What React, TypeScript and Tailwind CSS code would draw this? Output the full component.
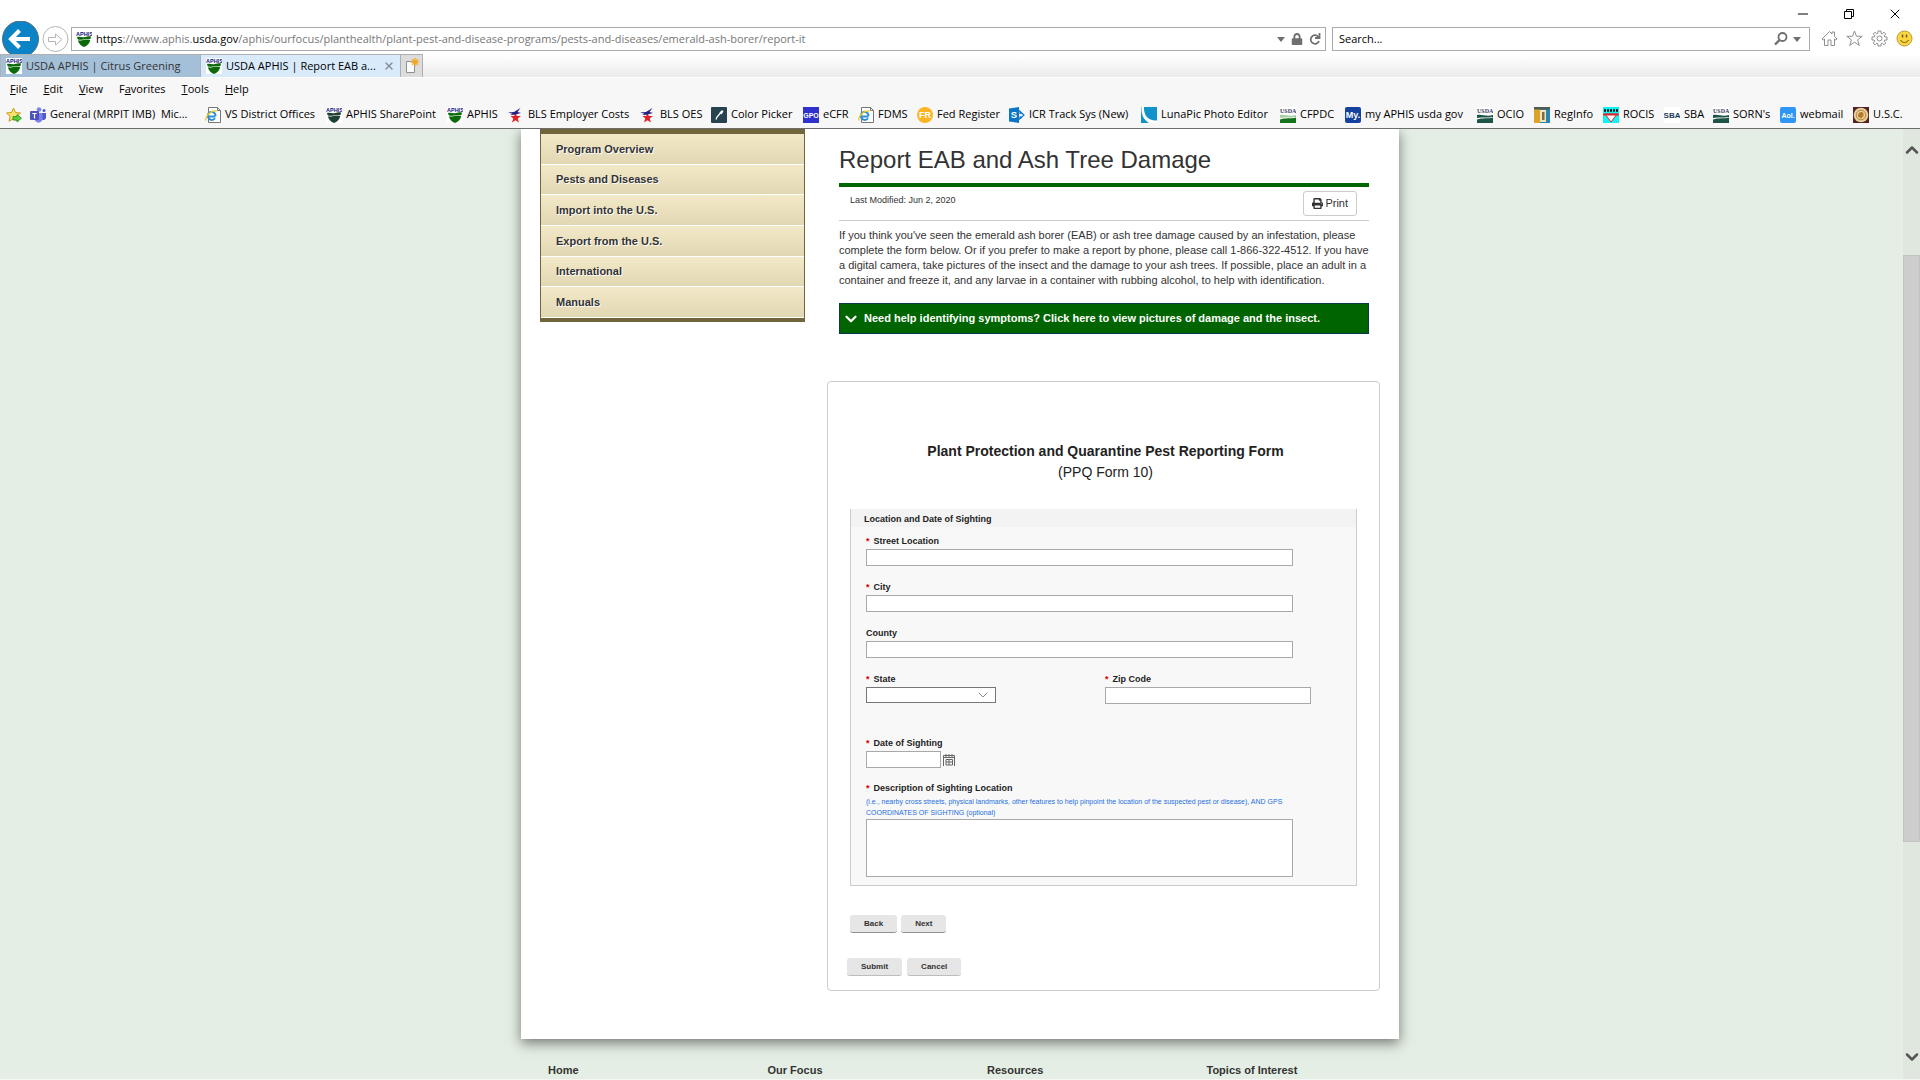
import type { ReactNode } from "react";
import { ChevronDown, ChevronUp, Minus, X } from "lucide-react";
import { FaLock, FaPrint } from "react-icons/fa";

function AphisIcon({ dark = false }: { dark?: boolean }) {
  const fill = dark ? "#1c4034" : "#0b6b0b";
  return (
    <svg viewBox="0 0 16 16" className="size-4 shrink-0 bg-white">
      <text x="0" y="4.5" fontSize="5.5" fontWeight="bold" fontFamily="Liberation Sans, sans-serif" fill="#10107c">
        APHIS
      </text>
      <path d="M1 6c3-1 5 1 8 0s4-1 6-.5L14.500 8C12 9 10 8 7 8.500S3 9 1.500 8z" fill={fill} />
      <path d="M1.800 9.300c3 .8 5-.6 7.500-.5s3 .6 5 .1C13.500 12.500 11 14.800 8 16c-3-1.200-5.400-3.300-6.200-6.700z" fill={fill} />
    </svg>
  );
}

function UsdaIcon({ dark = false }: { dark?: boolean }) {
  const fill = dark ? "#1e5347" : "#14711c";
  return (
    <svg viewBox="0 0 16 16" className="size-4 shrink-0 bg-white">
      <text x="0" y="6" fontSize="6" fontWeight="bold" fontFamily="Liberation Serif, serif" fill="#3b3b5e">
        USDA
      </text>
      <path d="M0 8c6-1 9 2 16 0v2c-6 1-10 0-16 1z" fill={dark ? fill : "#a9cfa4"} />
      <path d="M0 12.500c5-2 11-.5 16-2V16H0z" fill={fill} />
    </svg>
  );
}

function IePageIcon() {
  return (
    <svg viewBox="0 0 16 16" className="size-4 shrink-0">
      <path d="M3.500.5h9l3 3v12h-12z" fill="#fff" stroke="#777" />
      <path d="M12.500.5v3h3" fill="none" stroke="#777" />
      <path d="M10.500 9.500H3a3.800 3.800 0 1 1 7.500-.6M10 11.300a3.800 3.800 0 0 1-6.900-1.600" fill="none" stroke="#2a8fd8" strokeWidth="2" />
      <path d="M1 13.500C-.5 10 6 3 11.500 4" fill="none" stroke="#f2c71b" strokeWidth="1.300" />
    </svg>
  );
}

function BlsIcon() {
  return (
    <svg viewBox="0 0 16 16" className="size-4 shrink-0">
      <path d="M7.500 5.500 8.800 9H13l-3.300 2.500L11 15.500l-3.500-2.300L4 15.500l1.300-4L2.500 9h3.700z" fill="#e31f26" />
      <path d="M0 5.500 6 5l6.500-4L9.500 5 13 6 6.500 7.800 2 8l2.500-1.300z" fill="#22227e" />
    </svg>
  );
}

/* Square favicon with a short piece of lettering */
function LetterIcon({ text, bg, fg = "#fff", size = 7, round = 0 }: { text: string; bg: string; fg?: string; size?: number; round?: number }) {
  return (
    <svg viewBox="0 0 16 16" className="size-4 shrink-0">
      <rect width="16" height="16" rx={round} fill={bg} />
      <text x="8" y={8 + size * 0.36} fontSize={size} fontWeight="bold" textAnchor="middle" fontFamily="Liberation Sans, sans-serif" fill={fg}>
        {text}
      </text>
    </svg>
  );
}

function TeamsIcon() {
  return (
    <svg viewBox="0 0 16 16" className="size-4 shrink-0">
      <circle cx="9" cy="2.500" r="2.300" fill="#7b83eb" />
      <circle cx="14" cy="3.500" r="1.500" fill="#5059c9" />
      <path d="M11.500 6H16v4.500a2.500 2.500 0 0 1-4 2z" fill="#5059c9" />
      <path d="M5 6h7.500v6a4 4 0 0 1-7.500 1.500z" fill="#7b83eb" />
      <rect y="4" width="9" height="9" rx="1" fill="#4b53bc" />
      <path d="M2.300 6.500h4.400M4.500 6.500v5" stroke="#fff" strokeWidth="1.200" />
    </svg>
  );
}

function PickerIcon() {
  return (
    <svg viewBox="0 0 16 16" className="size-4 shrink-0">
      <rect width="16" height="16" rx="1" fill="#27434f" />
      <path d="M5 12.500 6 10l3.500-4" fill="none" stroke="#fff" strokeWidth="1.300" />
      <path d="m8.500 5.500 2.500-2.500 1.500 1.500L10.500 7.500z" fill="#fff" />
    </svg>
  );
}

function SharePointIcon() {
  return (
    <svg viewBox="0 0 16 16" className="size-4 shrink-0">
      <path d="M10 3.500 15 8l-5 4.500" fill="none" stroke="#0b76c8" strokeWidth="1.200" />
      <circle cx="11.500" cy="6" r="1.200" fill="#0b76c8" />
      <circle cx="11.500" cy="10.500" r="1.200" fill="#0b76c8" />
      <path d="M0 1.500 10 0v16L0 14.500z" fill="#0b76c8" />
      <text x="5" y="11.300" fontSize="9.500" fontWeight="bold" textAnchor="middle" fontFamily="Liberation Sans, sans-serif" fill="#fff">
        S
      </text>
    </svg>
  );
}

function LunaIcon() {
  return (
    <svg viewBox="0 0 16 16" className="size-4 shrink-0">
      <rect width="16" height="16" fill="#0f93c9" />
      <path d="M3 0c-.5 8 4 14 13 13.500V16H8C3 13 0 8 .5 0z" fill="#fff" />
    </svg>
  );
}

function RegInfoIcon() {
  return (
    <svg viewBox="0 0 16 16" className="size-4 shrink-0">
      <rect width="16" height="16" fill="#2b84ae" />
      <rect y="2" width="6" height="14" fill="#dca32a" />
      <path d="M6 3h6v12H6z" fill="#f0e3c2" />
      <path d="M8 5h2.500v8H8z" fill="#7d6a44" />
      <rect width="16" height="2.500" fill="#4d5b50" />
    </svg>
  );
}

function RocisIcon() {
  return (
    <svg viewBox="0 0 16 16" className="size-4 shrink-0">
      <rect width="16" height="16" fill="#11f2f5" />
      <path d="M2 7h12l-6 8z" fill="#fff" stroke="#e3262b" />
      <rect y="6.500" width="16" height="2" fill="#d9282c" />
      <path d="M1 3.500h14" stroke="#111" strokeWidth="2.500" strokeDasharray="2 1" />
    </svg>
  );
}

function SealIcon() {
  return (
    <svg viewBox="0 0 16 16" className="size-4 shrink-0">
      <rect width="16" height="16" fill="#542224" />
      <circle cx="8" cy="8" r="7.300" fill="#e7cf9a" />
      <circle cx="8" cy="8" r="4.800" fill="none" stroke="#b98538" />
      <path d="M5 9.500c0-3 1-4 3-4.500s3 1.500 2.500 4L8 11.500z" fill="#b8752b" />
    </svg>
  );
}

type Bookmark = { label: string; width: string; icon: ReactNode };

const bookmarks: Bookmark[] = [
  { label: "General (MRPIT IMB)\u00a0 Mic...", width: "w-[175px]", icon: <TeamsIcon /> },
  { label: "VS District Offices", width: "w-[121px]", icon: <IePageIcon /> },
  { label: "APHIS SharePoint", width: "w-[121px]", icon: <AphisIcon dark /> },
  { label: "APHIS", width: "w-[61px]", icon: <AphisIcon /> },
  { label: "BLS Employer Costs", width: "w-[132px]", icon: <BlsIcon /> },
  { label: "BLS OES", width: "w-[71px]", icon: <BlsIcon /> },
  { label: "Color Picker", width: "w-[92px]", icon: <PickerIcon /> },
  { label: "eCFR", width: "w-[55px]", icon: <LetterIcon text="GPO" bg="#3030cc" size={7} /> },
  { label: "FDMS", width: "w-[59px]", icon: <IePageIcon /> },
  { label: "Fed Register", width: "w-[92px]", icon: <LetterIcon text="FR" bg="#fbb524" size={9} round={8} /> },
  { label: "ICR Track Sys (New)", width: "w-[132px]", icon: <SharePointIcon /> },
  { label: "LunaPic Photo Editor", width: "w-[139px]", icon: <LunaIcon /> },
  { label: "CFPDC", width: "w-[65px]", icon: <UsdaIcon /> },
  { label: "my APHIS usda gov", width: "w-[132px]", icon: <LetterIcon text="My." bg="#1440a0" size={9} round={2} /> },
  { label: "OCIO", width: "w-[57px]", icon: <UsdaIcon dark /> },
  { label: "RegInfo", width: "w-[69px]", icon: <RegInfoIcon /> },
  { label: "ROCIS", width: "w-[61px]", icon: <RocisIcon /> },
  { label: "SBA", width: "w-[49px]", icon: <LetterIcon text="SBA" bg="#fff" fg="#173a55" size={8} /> },
  { label: "SORN's", width: "w-[67px]", icon: <UsdaIcon dark /> },
  { label: "webmail", width: "w-[73px]", icon: <LetterIcon text="Aol." bg="#2f96f5" size={7} round={2} /> },
  { label: "U.S.C.", width: "w-[56px]", icon: <SealIcon /> },
];

const menus = [
  ["", "F", "ile"],
  ["", "E", "dit"],
  ["", "V", "iew"],
  ["F", "a", "vorites"],
  ["", "T", "ools"],
  ["", "H", "elp"],
];

const navItems = [
  "Program Overview",
  "Pests and Diseases",
  "Import into the U.S.",
  "Export from the U.S.",
  "International",
  "Manuals",
];

function AddressBar() {
  return (
    <div className="flex h-[27px] items-start pl-[2px] pr-[7px]">
      <button aria-label="Back" className="-mt-[6px] h-[33px] w-[37px] shrink-0 overflow-hidden">
        <svg viewBox="0 0 37 33" className="h-[33px] w-[37px]">
          <circle cx="18.500" cy="18" r="18" fill="#0a84c6" stroke="#5b6c78" strokeWidth="1" />
          <path d="M28 18H9.500M17.500 9.500 9 18l8.500 8.500" fill="none" stroke="#fff" strokeWidth="4" />
        </svg>
      </button>
      <button aria-label="Forward" className="-mt-px ml-[3px] size-[27px] shrink-0">
        <svg viewBox="0 0 27 27" className="size-[27px]" fill="none" stroke="#b5b5b5">
          <circle cx="13.500" cy="13" r="12.500" />
          <path d="M6.500 11.500h7V8l6.500 5.500-6.500 5.500v-3.500h-7z" />
        </svg>
      </button>
      <div className="ml-[2px] flex h-6 flex-1 items-center border border-[#aaaaaa] bg-white pl-1 pr-1">
        <AphisIcon />
        <p className="ml-1 flex-1 whitespace-nowrap leading-4 text-[#777777]">
          <span className="text-black">https</span>://www.aphis.<span className="text-black">usda.gov</span>
          /aphis/ourfocus/planthealth/plant-pest-and-disease-programs/pests-and-diseases/emerald-ash-borer/report-it
        </p>
        <div className="flex items-center gap-[6px] text-[#6f6f6f]">
          <svg viewBox="0 0 8 5" className="h-[5px] w-2">
            <path d="M0 0h8L4 5z" fill="currentColor" />
          </svg>
          <FaLock size={12} />
          <svg viewBox="0 0 12 14" className="h-[14px] w-3" fill="none" stroke="currentColor" strokeWidth="1.800">
            <path d="M9.500 5A4.300 4.300 0 1 0 10 9" />
            <path d="M10.500 1v5H6" />
          </svg>
        </div>
      </div>
      <label className="ml-[6px] flex h-6 w-[478px] items-center border border-[#aaaaaa] bg-white pl-[6px] pr-2">
        <input
          aria-label="Search"
          placeholder="Search..."
          className="min-w-0 flex-1 bg-transparent leading-4 outline-none placeholder:text-black"
        />
        <svg viewBox="0 0 14 14" className="size-[14px]" fill="none" stroke="#6f6f6f" strokeWidth="1.800">
          <circle cx="8.500" cy="5" r="4" />
          <path d="M5.500 8 1 12.500" strokeWidth="2.400" />
        </svg>
        <svg viewBox="0 0 8 5" className="ml-[5px] h-[5px] w-2">
          <path d="M0 0h8L4 5z" fill="#6f6f6f" />
        </svg>
      </label>
      <div className="ml-[11px] mt-[3px] flex gap-2">
        <svg viewBox="0 0 17 17" className="size-[17px]" fill="none" stroke="#8f8f8f">
          <path d="M1 9 8.500 1.500l2.500 2.500V2h2.500v4.500L16 9l-1.200 1-1.300-1v6.500H10V10H7v5.500H3.500V9l-1.300 1z" />
        </svg>
        <svg viewBox="0 0 17 17" className="size-[17px]" fill="none" stroke="#8f8f8f">
          <path d="m8.500 1 2 5.300h5.700l-4.600 3.500 1.700 5.700-4.800-3.400-4.800 3.400 1.700-5.700L.8 6.300h5.700z" />
        </svg>
        <svg viewBox="0 0 17 17" className="size-[17px]" fill="none" stroke="#8f8f8f">
          <path d="M7 1h3v2.200l1.300.6L13 2.200 14.800 4l-1.600 1.700.6 1.300H16v3h-2.200l-.6 1.300 1.600 1.700-1.800 1.800-1.700-1.600-1.300.6V16H7v-2.200l-1.300-.6L4 14.800 2.200 13l1.600-1.700-.6-1.300H1V7h2.200l.6-1.300L2.200 4 4 2.200l1.700 1.600L7 3.200z" />
          <circle cx="8.500" cy="8.500" r="2.500" />
        </svg>
        <svg viewBox="0 0 17 17" className="size-[17px]">
          <circle cx="8.500" cy="8.500" r="7.500" fill="#fbd63c" stroke="#b79a3c" />
          <path d="M6.500 4.500v3M10.500 4.500v3" stroke="#6a5714" strokeWidth="1.500" />
          <path d="M4.500 10c1.500 3.300 6.500 3.300 8 0" fill="none" stroke="#6a5714" />
        </svg>
      </div>
    </div>
  );
}

function BrowserChrome() {
  return (
    <header className="shrink-0 border-b border-[#6d6d6d] bg-[#f7f7f7] font-['Open_Sans','Noto_Sans',sans-serif] text-[11px] text-black">
      <div className="bg-white">
        {/* Window controls */}
        <div className="flex h-[27px] items-center justify-end gap-[30px] pr-[17px]">
          <button aria-label="Minimize">
            <Minus size={16} strokeWidth={1.5} />
          </button>
          <button aria-label="Restore">
            <svg viewBox="0 0 16 16" className="size-4" fill="none" stroke="#000">
              <path d="M3.500 5.500h7v7h-7zM5.500 5.500v-2h7v7h-2" />
            </svg>
          </button>
          <button aria-label="Close">
            <X size={16} strokeWidth={1.5} />
          </button>
        </div>
        <AddressBar />
      </div>

      {/* Tabs */}
      <div className="flex h-[23px] bg-linear-to-b from-white to-[#ececec]">
        <button className="flex w-[201px] items-center border-x border-t border-[#b0b0b0] bg-[#a4c0d9] pl-[5px] text-[#333333]">
          <AphisIcon />
          <span className="ml-1 whitespace-nowrap">USDA APHIS | Citrus Greening</span>
        </button>
        <button className="flex w-[200px] items-center border-r border-t border-[#b0b0b0] bg-[#d9ebfb] pl-[5px] pr-[5px]">
          <AphisIcon />
          <span className="ml-1 flex-1 whitespace-nowrap text-left">USDA APHIS | Report EAB a...</span>
          <X size={12} strokeWidth={3} className="shrink-0 text-[#8a9299]" />
        </button>
        <button aria-label="New tab" className="flex w-[22px] items-center justify-center border-r border-t border-[#b0b0b0] bg-[#dcdcdc]">
          <svg viewBox="0 0 16 16" className="size-4">
            <path d="M2.500 3.500h8v11h-8z" fill="#fbfbfb" stroke="#8f8f8f" />
            <path d="M11 0v8M7 4h8M8.200 1.200l5.600 5.600M13.800 1.200 8.200 6.800" stroke="#f5a623" strokeWidth="1.300" />
          </svg>
        </button>
      </div>

      {/* Menu bar */}
      <nav className="flex h-6 items-center gap-4 border-t border-white pl-[10px]">
        {menus.map(([before, key, after]) => (
          <button key={key + after}>
            {before}
            <span className="underline">{key}</span>
            {after}
          </button>
        ))}
      </nav>

      {/* Favorites bar */}
      <nav className="flex h-[27px] items-center overflow-hidden pl-[6px]">
        <svg viewBox="0 0 16 16" className="mr-2 size-4 shrink-0">
          <path d="m7.500 1 2 4.500 5 .5-3.700 3.300 1 5-4.300-2.600-4.500 2.600 1.200-5L.5 6l5-.5z" fill="#fde26b" stroke="#c99a1a" />
          <path d="M7 9.500h4V7.500l4.500 3.700L11 15v-2H7z" fill="#5ccf3d" stroke="#2a8a1c" strokeWidth=".8" />
        </svg>
        {bookmarks.map(({ label, width, icon }) => (
          <a key={label} href="#" className={`flex shrink-0 items-center gap-1 whitespace-nowrap ${width}`}>
            {icon}
            {label}
          </a>
        ))}
      </nav>
    </header>
  );
}

function Label({ htmlFor, required = false, children }: { htmlFor: string; required?: boolean; children: ReactNode }) {
  return (
    <label htmlFor={htmlFor} className="mb-[2px] block text-[9px] leading-3 font-bold text-[#222222]">
      {required && <span className="mr-1 text-[#dd0000]">*</span>}
      {children}
    </label>
  );
}

const inputClass = "block h-[17px] border border-[#a9a9a9] bg-white px-1 text-[10px] outline-none";
const buttonClass =
  "h-[18px] rounded-[3px] border-b bg-[#e6e6e6] px-[14px] text-[8px] leading-4 font-bold text-[#333333]";

function ReportForm() {
  return (
    <form className="mt-[47px] rounded border border-[#cccccc] px-[19px] pt-[59px] pb-[14px]">
      <div className="pl-1 text-center text-sm leading-[21px] text-[#222222]">
        <h2 className="font-bold">Plant Protection and Quarantine Pest Reporting Form</h2>
        <p className="leading-[21px]">(PPQ Form 10)</p>
      </div>

      <section className="mx-[3px] mt-[26px] border-x border-b border-[#cccccc] bg-[#f8f8f8]">
        <h3 className="h-[18px] bg-[#f3f3f3] pl-[13px] text-[9px] leading-5 font-bold text-[#222222]">
          Location and Date of Sighting
        </h3>
        <div className="px-[15px] pt-2 pb-2">
          <div className="flex flex-col gap-[15px]">
            <div>
              <Label htmlFor="street" required>Street Location</Label>
              <input id="street" className={`${inputClass} w-[427px]`} />
            </div>
            <div>
              <Label htmlFor="city" required>City</Label>
              <input id="city" className={`${inputClass} w-[427px]`} />
            </div>
            <div>
              <Label htmlFor="county">County</Label>
              <input id="county" className={`${inputClass} w-[427px]`} />
            </div>
            <div className="flex">
              <div className="w-[239px]">
                <Label htmlFor="state" required>State</Label>
                <div className="relative w-[130px]">
                  <select id="state" className="block h-4 w-full appearance-none border border-[#767676] bg-white text-[10px] outline-none" />
                  <ChevronDown size={16} strokeWidth={1.5} className="pointer-events-none absolute top-0 right-[5px] text-[#888888]" />
                </div>
              </div>
              <div>
                <Label htmlFor="zip" required>Zip Code</Label>
                <input id="zip" className={`${inputClass} w-[206px]`} />
              </div>
            </div>
          </div>

          <div className="mt-[33px]">
            <Label htmlFor="date" required>Date of Sighting</Label>
            <div className="flex items-center gap-[2px]">
              <input id="date" className={`${inputClass} w-[75px]`} />
              <button type="button" aria-label="Pick a date">
                <svg viewBox="0 0 12 12" className="size-3" fill="none" stroke="#666666">
                  <path d="M.5 12V1.500h11V12M.5 3.500h11" />
                  <path d="M3 0v3M6 0v3M9 0v3" />
                  <path d="M3 5.500h6.500v5.500H3zM3 8h6.500M6 5.500V11" />
                </svg>
              </button>
            </div>
          </div>

          <div className="mt-[14px]">
            <Label htmlFor="description" required>Description of Sighting Location</Label>
            <p id="hint" className="mb-px text-[7px] leading-[11px] text-[#1e6fe0]">
              (i.e., nearby cross streets, physical landmarks, other features to help pinpoint the location of the suspected pest or disease), AND GPS
              <br />
              COORDINATES OF SIGHTING (optional)
            </p>
            <textarea
              id="description"
              aria-describedby="hint"
              className="block h-[58px] w-[427px] resize-none border border-[#a9a9a9] bg-white p-1 text-[10px] outline-none"
            />
          </div>
        </div>
      </section>

      <div className="mx-[3px] mt-[29px] flex gap-1">
        <button type="button" className={`${buttonClass} border-[#8f8f8f]`}>Back</button>
        <button type="button" className={`${buttonClass} border-[#8f8f8f]`}>Next</button>
      </div>
      <div className="mt-[25px] flex gap-[5px]">
        <button type="button" className={`${buttonClass} border-[#bdbdbd]`}>Submit</button>
        <button type="button" className={`${buttonClass} border-[#bdbdbd]`}>Cancel</button>
      </div>
    </form>
  );
}

function Scrollbar() {
  return (
    <div className="flex w-[17px] shrink-0 flex-col items-center bg-[#dfe7df] text-[#555555]">
      <div className="flex h-[126px] pt-[11px]">
        <ChevronUp size={20} strokeWidth={3} />
      </div>
      <div className="h-[587px] w-full border border-[#bfc4bf] bg-[#cdcdcd]" />
      <div className="flex flex-1 items-end pb-3">
        <ChevronDown size={20} strokeWidth={3} />
      </div>
    </div>
  );
}

export default function App() {
  return (
    <div className="flex h-screen flex-col overflow-hidden">
      <BrowserChrome />

      <div className="flex min-h-0 flex-1 border-b border-[#f5f7f5] bg-[#e4eee4] font-['Liberation_Sans',Arial,sans-serif] text-[#333333]">
        <div className="flex-1 overflow-hidden pl-[17px]">
          <div className="mx-auto flex w-full max-w-[878px] items-start gap-[22px] bg-white px-[19px] pb-12 shadow-[0_4px_12px_rgba(0,0,0,0.5)]">
            {/* Side navigation */}
            <nav className="flex h-[193px] w-[265px] shrink-0 flex-col border-x border-t-[5px] border-b-4 border-[#70653b]">
              {navItems.map((item) => (
                <a
                  key={item}
                  href="#"
                  className="flex flex-1 items-center border-b border-white bg-linear-to-b from-[#f2e9c8] to-[#e2d7b3] pl-[15px] text-[11px] font-bold text-shadow-[1px_1px_0_#ffffff]"
                >
                  {item}
                </a>
              ))}
            </nav>

            <main className="min-w-0 flex-1">
              <div className="pt-[13px] pr-[11px] pl-3">
                <h1 className="border-b-4 border-[#006400] pb-[5px] text-2xl leading-9">Report EAB and Ash Tree Damage</h1>
                <div className="flex items-start justify-between border-b border-[#cccccc] py-1 pr-3 pl-[11px]">
                  <p className="text-[9px] leading-[18px]">Last Modified: Jun 2, 2020</p>
                  <button className="flex h-[25px] items-center gap-[2px] rounded-[3px] border border-[#cccccc] px-2 text-[11px]">
                    <FaPrint size={11} />
                    Print
                  </button>
                </div>
                <p className="mt-[7px] whitespace-nowrap text-[11px] leading-[15px]">
                  If you think you've seen the emerald ash borer (EAB) or ash tree damage caused by an infestation, please
                  <br />
                  complete the form below. Or if you prefer to make a report by phone, please call 1-866-322-4512. If you have
                  <br />
                  a digital camera, take pictures of the insect and the damage to your ash trees. If possible, place an adult in a
                  <br />
                  container and freeze it, and any larvae in a container with rubbing alcohol, to help with identification.
                </p>
                <button className="mt-[15px] flex h-[31px] w-full items-center gap-1 border border-[#0b3a4a] bg-[#006400] pl-[2px] text-[11px] font-bold text-white">
                  <ChevronDown size={18} strokeWidth={3} />
                  Need help identifying symptoms? Click here to view pictures of damage and the insect.
                </button>
              </div>

              <ReportForm />
            </main>
          </div>

          <footer className="mx-auto mt-[23px] grid w-full max-w-[878px] grid-cols-4 text-[11px] leading-4 font-bold">
            <a href="#" className="pl-[27px]">Home</a>
            <a href="#" className="pl-[27px]">Our Focus</a>
            <a href="#" className="pl-[27px]">Resources</a>
            <a href="#" className="pl-[27px]">Topics of Interest</a>
          </footer>
        </div>
        <Scrollbar />
      </div>
    </div>
  );
}
